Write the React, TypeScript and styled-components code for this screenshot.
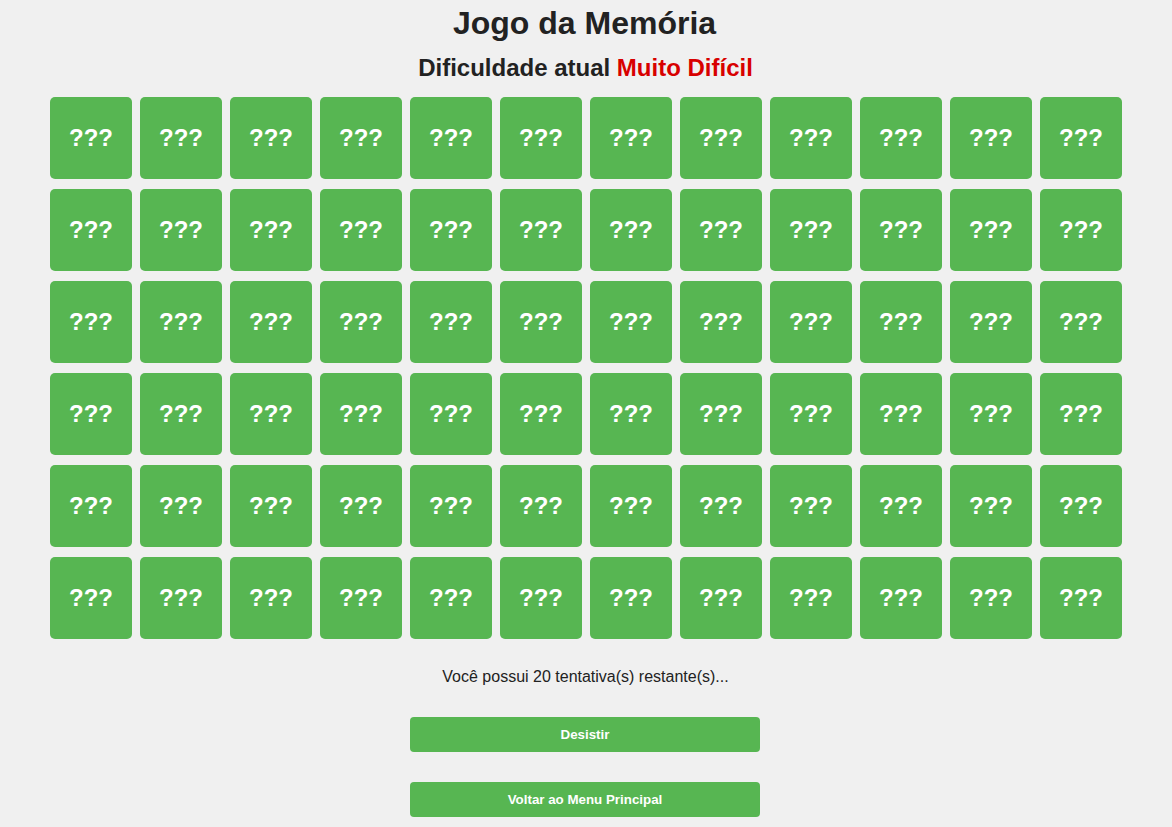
import React from "react";
import styled, { createGlobalStyle } from "styled-components";

const GlobalStyle = createGlobalStyle`
  html, body {
    margin: 0;
    padding: 0;
    background: #f0f0f0;
    font-family: "Liberation Sans", Arial, sans-serif;
    color: #222;
  }
`;

const Page = styled.main`
  display: flex;
  flex-direction: column;
  align-items: center;
  padding-top: 5px;
`;

const Title = styled.h1`
  margin: 0 3px 0 0;
  font-size: 32px;
  font-weight: bold;
  color: #222;
`;

const Subtitle = styled.h2`
  margin: 12px 1px 15px 0;
  font-size: 24px;
  font-weight: bold;
  color: #222;
`;

const Level = styled.span`
  color: #d80000;
`;

const Board = styled.div`
  display: grid;
  grid-template-columns: repeat(12, 82px);
  column-gap: 8px;
  row-gap: 10px;
`;

const Card = styled.div`
  width: 82px;
  height: 82px;
  border-radius: 5px;
  background: #57b652;
  color: #fff;
  display: flex;
  align-items: center;
  justify-content: center;
  font-size: 24px;
  font-weight: bold;
  cursor: pointer;
`;

const Status = styled.p`
  margin: 29px 1px 31px 0;
  font-size: 16px;
  color: #222;
`;

const ActionButton = styled.button`
  width: 350px;
  height: 35px;
  margin: 0 2px 30px 0;
  border: none;
  border-radius: 4px;
  background: #57b652;
  color: #fff;
  font-family: "Liberation Sans", Arial, sans-serif;
  font-size: 13.333px;
  font-weight: bold;
  cursor: pointer;
`;

export default function App() {
  const cards = Array.from({ length: 72 }, (_, i) => i);
  return (
    <>
      <GlobalStyle />
      <Page>
        <Title>Jogo da Memória</Title>
        <Subtitle>
          Dificuldade atual <Level>Muito Difícil</Level>
        </Subtitle>
        <Board>
          {cards.map((i) => (
            <Card key={i}>???</Card>
          ))}
        </Board>
        <Status>Você possui 20 tentativa(s) restante(s)...</Status>
        <ActionButton>Desistir</ActionButton>
        <ActionButton>Voltar ao Menu Principal</ActionButton>
      </Page>
    </>
  );
}
